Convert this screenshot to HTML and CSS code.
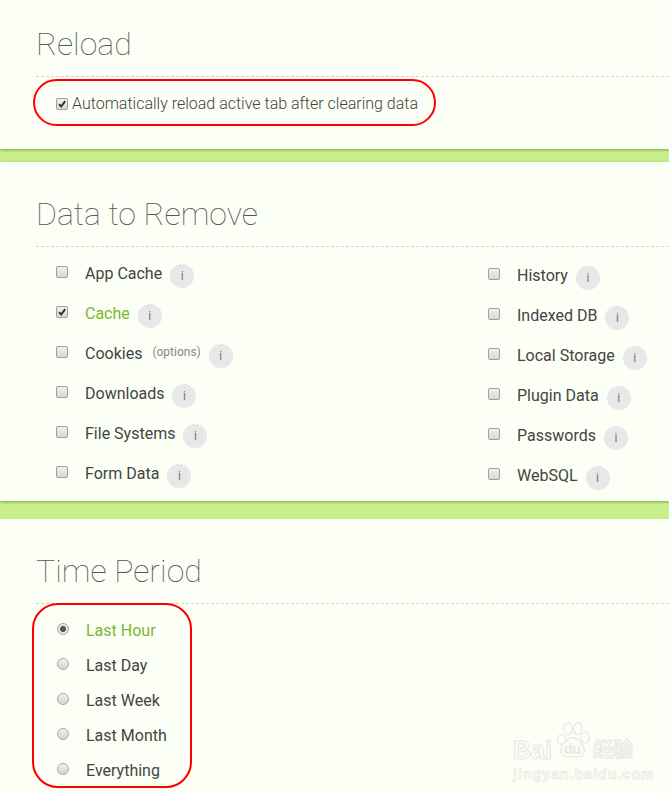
FILE: index.html
```html
<!DOCTYPE html>
<html lang="en">
<head>
<meta charset="utf-8">
<title>Options</title>
<link rel="stylesheet" href="styles.css">
</head>
<body>
<section class="panel panel-reload">
  <h2 class="title">Reload</h2>
  <div class="reload-row">
    <span class="box"><svg viewBox="0 0 12 12"><path class="tick" d="M2.5 6.2 5 9 9.8 2.6"/></svg></span>
    <span class="label">Automatically reload active tab after clearing data</span>
  </div>
</section>
<section class="panel panel-data">
  <h2 class="title">Data to Remove</h2>
  <div class="columns">
    <div class="col">
      <div class="item"><span class="box"></span><span class="name">App Cache</span><span class="info">i</span></div>
      <div class="item"><span class="box"><svg viewBox="0 0 12 12"><path class="tick" d="M2.5 6.2 5 9 9.8 2.6"/></svg></span><span class="name on">Cache</span><span class="info">i</span></div>
      <div class="item"><span class="box"></span><span class="name">Cookies</span><span class="opt">(options)</span><span class="info">i</span></div>
      <div class="item"><span class="box"></span><span class="name">Downloads</span><span class="info">i</span></div>
      <div class="item"><span class="box"></span><span class="name">File Systems</span><span class="info">i</span></div>
      <div class="item"><span class="box"></span><span class="name">Form Data</span><span class="info">i</span></div>
    </div>
    <div class="col-right">
      <div class="item"><span class="box"></span><span class="name">History</span><span class="info">i</span></div>
      <div class="item"><span class="box"></span><span class="name">Indexed DB</span><span class="info">i</span></div>
      <div class="item"><span class="box"></span><span class="name">Local Storage</span><span class="info">i</span></div>
      <div class="item"><span class="box"></span><span class="name">Plugin Data</span><span class="info">i</span></div>
      <div class="item"><span class="box"></span><span class="name">Passwords</span><span class="info">i</span></div>
      <div class="item"><span class="box"></span><span class="name">WebSQL</span><span class="info">i</span></div>
    </div>
  </div>
</section>
<section class="panel panel-time">
  <h2 class="title">Time Period</h2>
  <div class="radios">
    <div class="radio-row"><span class="radio checked"></span><span class="name on">Last Hour</span></div>
    <div class="radio-row"><span class="radio"></span><span class="name">Last Day</span></div>
    <div class="radio-row"><span class="radio"></span><span class="name">Last Week</span></div>
    <div class="radio-row"><span class="radio"></span><span class="name">Last Month</span></div>
    <div class="radio-row"><span class="radio"></span><span class="name">Everything</span></div>
  </div>
</section>
<div class="ring ring-reload"></div>
<div class="ring ring-time"></div>
<div class="watermark">
  <svg class="paw" viewBox="0 0 60 62"><g fill="none" stroke="#e6e8e2" stroke-width="2"><ellipse cx="11" cy="30" rx="7" ry="8"/><ellipse cx="22" cy="12" rx="7" ry="10"/><ellipse cx="38" cy="12" rx="7" ry="10"/><ellipse cx="50" cy="27" rx="7" ry="9"/><path d="M30 27c9 0 19 13 19 22 0 10-9 11-19 9-10 2-20 1-20-9 0-9 11-22 20-22z"/></g></svg>
  <span class="wm-bai">Bai</span><span class="wm-du">du</span><span class="wm-cn">经验</span>
  <span class="wm-url">jingyan.baidu.com</span>
</div>
</body>
</html>
```

FILE: styles.css
```css
* { box-sizing: border-box; }
html, body { margin: 0; padding: 0; }
body {
  position: relative;
  width: 669px;
  height: 794px;
  overflow: hidden;
  background: #c8f08a;
  font-family: Roboto, "Liberation Sans", sans-serif;
  font-size: 16px;
  color: #444;
}
.panel {
  background: #fcfff5;
  padding: 0 0 0 36px;
}
.panel-reload { height: 149px; padding-top: 22px; box-shadow: 0 1px 3px rgba(70, 90, 40, .55); position: relative; }
.panel-data { height: 339px; margin-top: 13px; padding-top: 30px; box-shadow: 0 1px 3px rgba(70, 90, 40, .55); position: relative; }
.panel-time { height: 275px; margin-top: 18px; padding-top: 30px; }
.title {
  margin: 0;
  height: 55px;
  line-height: 44px;
  font-size: 32px;
  font-weight: 100;
  color: #555;
  border-bottom: 1px dashed #d4d4d0;
}
.reload-row { display: flex; align-items: center; padding: 13px 0 0 20px; height: 40px; }
.reload-row .label { margin-left: 4px; font-weight: 300; color: #444; }
.box {
  flex: none;
  width: 12px;
  height: 12px;
  border: 1px solid #a0a0a0;
  border-radius: 2px;
  background: linear-gradient(#f0f0f0, #d8d8d8);
  display: flex;
}
.box svg { width: 10px; height: 10px; }
.tick { fill: none; stroke: #333; stroke-width: 2.4; }
.columns { display: flex; padding-top: 6px; }
.col { flex: none; width: 432px; padding-left: 20px; }
.col-right { flex: 1; min-width: 0; padding: 2px 0 0 20px; }
.item { display: flex; align-items: center; height: 40px; }
.item .box { margin-top: -2px; margin-right: 17px; }
.name { font-weight: 400; color: #444; white-space: nowrap; }
.name.on { color: #7ab82e; }
.opt { margin-left: 10px; font-size: 12px; color: #888; margin-top: -2px; }
.info {
  flex: none;
  width: 24px;
  height: 24px;
  margin-left: 8px;
  margin-top: 5px;
  border-radius: 50%;
  background: #e8e8e8;
  color: #777;
  font-size: 12px;
  line-height: 24px;
  text-align: center;
}
.radios { padding: 9px 0 0 21px; }
.radio-row { display: flex; align-items: center; height: 35px; }
.radio {
  width: 12px;
  height: 12px;
  border-radius: 50%;
  border: 1px solid #a8a8a8;
  background: linear-gradient(#f0f0f0, #d4d4d4);
  margin-right: 17px;
  margin-top: -4px;
  flex: none;
}
.radio.checked { background: radial-gradient(circle, #555 0 2.6px, #e6e6e6 3.4px); }
.ring { position: absolute; border: 2px solid #f00; pointer-events: none; }
.ring-reload { left: 33px; top: 79px; width: 403px; height: 47px; border-radius: 24px; }
.ring-time { left: 32px; top: 603px; width: 160px; height: 185px; border-radius: 26px; }
.watermark { position: absolute; left: 512px; top: 721px; width: 150px; height: 70px; color: #e6e8e2; }
.paw { position: absolute; left: 43px; top: 0; width: 36px; height: 38px; }
.wm-bai, .wm-du, .wm-cn, .wm-url { position: absolute; white-space: nowrap; }
.wm-bai { left: 1px; top: 15px; font: 700 25px/28px "Liberation Sans", sans-serif; color: transparent; -webkit-text-stroke: 1px #e6e8e2; }
.wm-du { left: 52px; top: 19px; font: 700 14px/18px "Liberation Sans", sans-serif; color: #e6e8e2; }
.wm-cn { left: 81px; top: 15px; font: 700 20px/26px "Noto Sans CJK SC", sans-serif; color: transparent; -webkit-text-stroke: 1px #e6e8e2; }
.wm-url { left: 1px; top: 44px; font: 700 14px/18px "Liberation Sans", sans-serif; letter-spacing: 1.1px; color: transparent; -webkit-text-stroke: .7px #e6e8e2; }
```
